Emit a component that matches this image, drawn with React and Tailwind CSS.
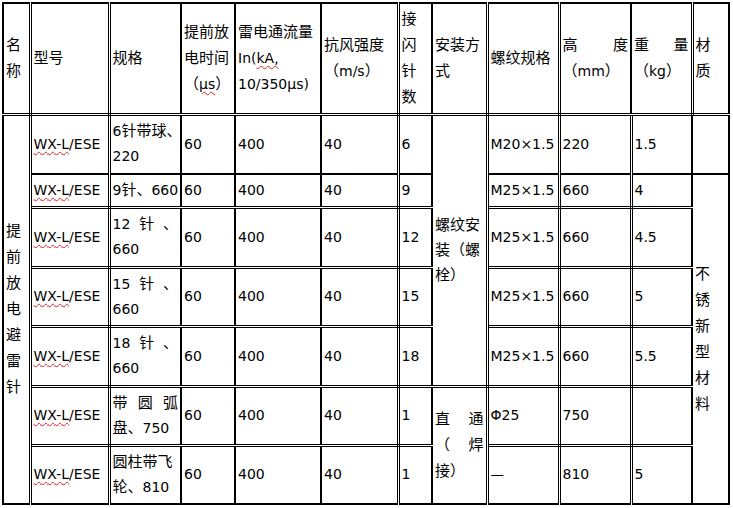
import React from "react";

// collapsed borders: every cell draws only its right and bottom edge
const rD = "[border-right:3px_double_#000]";
const rS = "[border-right:2px_solid_#000]";
const bD = "[border-bottom:3px_double_#000]";
const bS = "[border-bottom:2px_solid_#000]";
const lS = "[border-left:2px_solid_#000]";
const tS = "[border-top:2px_solid_#000]";

const Z = ({ children }) => <span className="text-[15px]">{children}</span>;

const Wavy = ({ children }) => (
  <span className="underline decoration-wavy decoration-[#e02020] decoration-1 underline-offset-[2px]">
    {children}
  </span>
);

const Spread = ({ parts }) => (
  <div className="flex justify-between">
    {parts.map((p, i) => (
      <span key={i}>{p}</span>
    ))}
  </div>
);

const Stack = ({ text }) => (
  <Z>
    {[...text].map((c, i) => (
      <div key={i}>{c}</div>
    ))}
  </Z>
);

const Td = ({ r = rD, b = bD, extra = "", children, ...rest }) => (
  <td className={`${r} ${b} ${extra} px-[2px] align-middle whitespace-nowrap overflow-visible`} {...rest}>
    {children}
  </td>
);

const Model = () => (
  <>
    <Wavy>WX-L</Wavy>/ESE
  </>
);

const rows = [
  {
    h: "h-[60px]",
    spec: (
      <>
        6<Z>针带球、</Z>
        <br />
        220
      </>
    ),
    pins: "6",
    thread: "M20×1.5",
    height: "220",
    weight: "1.5",
    b: bS,
  },
  {
    h: "h-[33px]",
    spec: (
      <>
        9<Z>针、</Z>660
      </>
    ),
    pins: "9",
    thread: "M25×1.5",
    height: "660",
    weight: "4",
    b: bD,
  },
  {
    h: "h-[60px]",
    spec: (
      <>
        <Spread parts={["12", <Z>针</Z>, <Z>、</Z>]} />
        660
      </>
    ),
    pins: "12",
    thread: "M25×1.5",
    height: "660",
    weight: "4.5",
    b: bD,
  },
  {
    h: "h-[59px]",
    spec: (
      <>
        <Spread parts={["15", <Z>针</Z>, <Z>、</Z>]} />
        660
      </>
    ),
    pins: "15",
    thread: "M25×1.5",
    height: "660",
    weight: "5",
    b: bD,
  },
  {
    h: "h-[60px]",
    spec: (
      <>
        <Spread parts={["18", <Z>针</Z>, <Z>、</Z>]} />
        660
      </>
    ),
    pins: "18",
    thread: "M25×1.5",
    height: "660",
    weight: "5.5",
    b: bD,
  },
  {
    h: "h-[59px]",
    spec: (
      <>
        <Spread parts={[<Z>带</Z>, <Z>圆</Z>, <Z>弧</Z>]} />
        <Z>盘、</Z>750
      </>
    ),
    pins: "1",
    thread: "Φ25",
    height: "750",
    weight: "",
    b: bD,
  },
  {
    h: "h-[59px]",
    spec: (
      <>
        <Z>圆柱带飞</Z>
        <br />
        <Z>轮、</Z>810
      </>
    ),
    pins: "1",
    thread: <span className="font-['Noto_Sans_CJK_SC',sans-serif] text-[15px]">—</span>,
    height: "810",
    weight: "5",
    b: bS,
  },
];

export default function App() {
  return (
    <div className="bg-white w-[733px] h-[508px] pl-[2px] pt-[2px] text-black text-[14px] font-['DejaVu_Sans','Noto_Sans_CJK_SC',sans-serif]">
      <table className="table-fixed border-collapse w-[727px]">
        <colgroup>
          <col className="w-[27px]" />
          <col className="w-[79px]" />
          <col className="w-[72px]" />
          <col className="w-[54px]" />
          <col className="w-[86px]" />
          <col className="w-[77px]" />
          <col className="w-[34px]" />
          <col className="w-[55px]" />
          <col className="w-[72px]" />
          <col className="w-[72px]" />
          <col className="w-[61px]" />
          <col className="w-[37px]" />
        </colgroup>
        <tbody>
          <tr className="h-[111px] leading-[26px]">
            <Td extra={`${lS} ${tS}`}>
              <Z>
                名<br />称
              </Z>
            </Td>
            <Td extra={tS}>
              <Z>型号</Z>
            </Td>
            <Td extra={tS} r={rS}>
              <Z>规格</Z>
            </Td>
            <Td extra={tS} r={rS}>
              <Z>
                提前放<br />电时间<br />（
              </Z>
              <Wavy>μs</Wavy>
              <Z>）</Z>
            </Td>
            <Td extra={tS} r={rS}>
              <Z>雷电通流量</Z>
              <br />
              In(<Wavy>kA,</Wavy>
              <br />
              10/350μs)
            </Td>
            <Td extra={tS}>
              <Z>
                抗风强度<br />（
              </Z>
              m/s<Z>）</Z>
            </Td>
            <Td extra={tS} r={rS}>
              <Stack text="接闪针数" />
            </Td>
            <Td extra={tS}>
              <Z>
                安装方<br />式
              </Z>
            </Td>
            <Td extra={tS}>
              <Z>螺纹规格</Z>
            </Td>
            <Td extra={tS} r={rS}>
              <Spread parts={[<Z>高</Z>, <Z>度</Z>]} />
              <Z>（</Z>mm<Z>）</Z>
            </Td>
            <Td extra={tS}>
              <Spread parts={[<Z>重</Z>, <Z>量</Z>]} />
              <Z>（</Z>kg<Z>）</Z>
            </Td>
            <Td extra={tS} r={rS}>
              <Z>
                材<br />质
              </Z>
            </Td>
          </tr>

          {rows.map((row, i) => (
            <tr key={i} className={`${row.h} leading-[25px]`}>
              {i === 0 && (
                <Td rowSpan={7} b={bS} extra={`${lS} leading-[26px]`}>
                  <Stack text="提前放电避雷针" />
                </Td>
              )}
              <Td b={row.b}>
                <Model />
              </Td>
              <Td b={row.b} r={rS}>
                {row.spec}
              </Td>
              <Td b={row.b} r={rS}>
                60
              </Td>
              <Td b={row.b} r={rS}>
                400
              </Td>
              <Td b={row.b}>40</Td>
              <Td b={row.b} r={rS}>
                {row.pins}
              </Td>
              {i === 0 && (
                <Td rowSpan={5}>
                  <Z>
                    螺纹安<br />装（螺<br />栓）
                  </Z>
                </Td>
              )}
              {i === 5 && (
                <Td rowSpan={2} b={bS} extra="leading-[26px]">
                  <Spread parts={[<Z>直</Z>, <Z>通</Z>]} />
                  <Spread parts={[<Z>（</Z>, <Z>焊</Z>]} />
                  <Z>接）</Z>
                </Td>
              )}
              <Td b={row.b}>{row.thread}</Td>
              <Td b={row.b}>{row.height}</Td>
              <Td b={row.b} r={rS}>
                {row.weight}
              </Td>
              {i === 0 && <Td b={bS} r={rS}></Td>}
              {i === 1 && (
                <Td rowSpan={6} b={bS} r={rS} extra="leading-[26px]">
                  <Stack text="不锈新型材料" />
                </Td>
              )}
            </tr>
          ))}
        </tbody>
      </table>
    </div>
  );
}
